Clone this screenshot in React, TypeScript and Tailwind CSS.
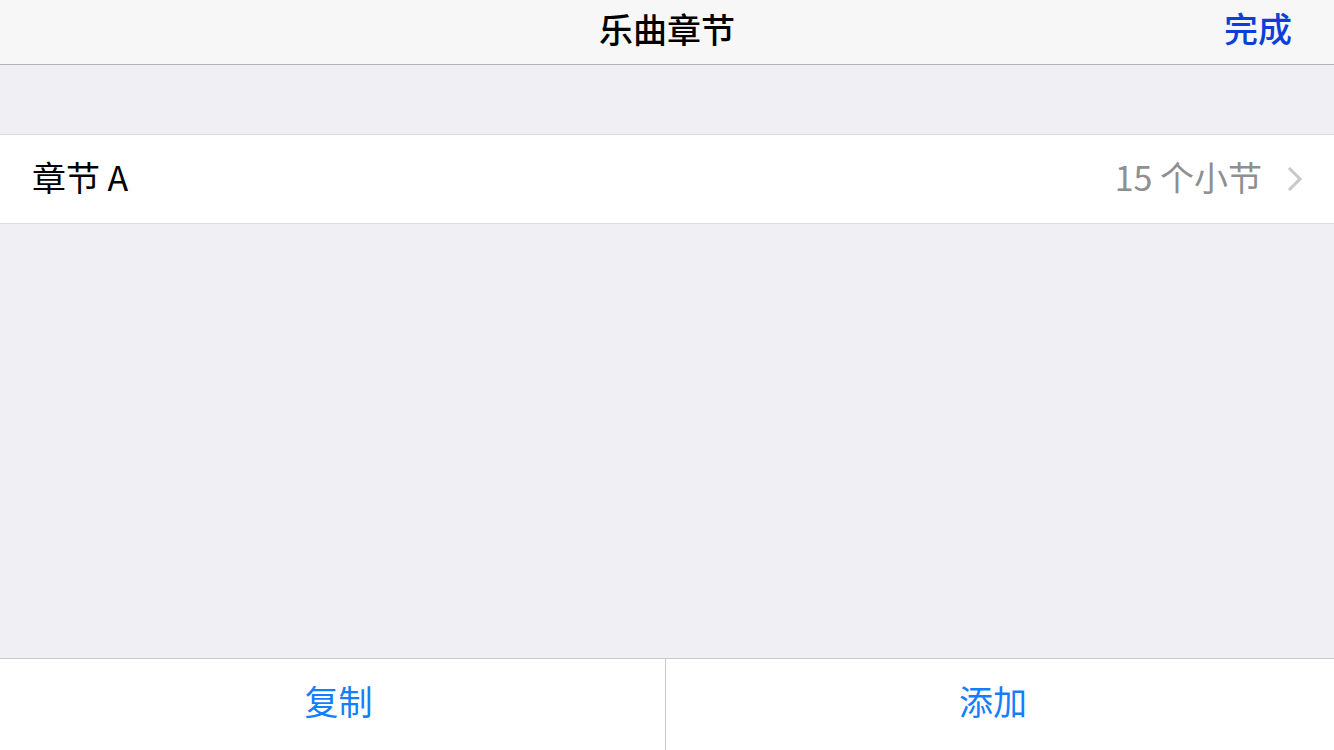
import React from "react";

const font = { fontFamily: '"Noto Sans CJK SC", "Noto Sans", sans-serif' };

export default function App() {
  return (
    <div className="w-[1334px] h-[750px] flex flex-col bg-[#efeff4] overflow-hidden" style={font}>
      <div className="h-[65px] shrink-0 bg-[#f7f7f7] border-b border-[#b2b2b2] relative flex items-center justify-center pb-[7px]">
        <span className="text-[34px] font-medium text-black leading-none">乐曲章节</span>
        <span className="absolute right-[42px] top-[11px] text-[34px] font-medium text-[#0a3fdc] leading-none">完成</span>
      </div>
      <div className="h-[69px] shrink-0" />
      <div className="h-[90px] shrink-0 bg-white border-y border-[#dcdce0] flex items-center pl-[32px] pr-[30px] pb-[5px]">
        <span className="text-[34px] text-black leading-none flex-1">章节 A</span>
        <span className="text-[34px] text-[#8e8e93] leading-none">15 个小节</span>
        <svg className="ml-[24px] mt-[4px]" width="18" height="28" viewBox="0 0 18 28">
          <path d="M3 3 L14 14 L3 25" fill="none" stroke="#c7c7cc" strokeWidth="3" />
        </svg>
      </div>
      <div className="flex-1" />
      <div className="h-[92px] shrink-0 bg-white border-t border-[#c8c8cc] flex">
        <div className="w-[666px] border-r border-[#c8c8cc] flex items-center justify-center pl-[12px] pb-[7px]">
          <span className="text-[34px] text-[#147efb] leading-none">复制</span>
        </div>
        <div className="flex-1 flex items-center justify-center pr-[14px] pb-[7px]">
          <span className="text-[34px] text-[#147efb] leading-none">添加</span>
        </div>
      </div>
    </div>
  );
}
